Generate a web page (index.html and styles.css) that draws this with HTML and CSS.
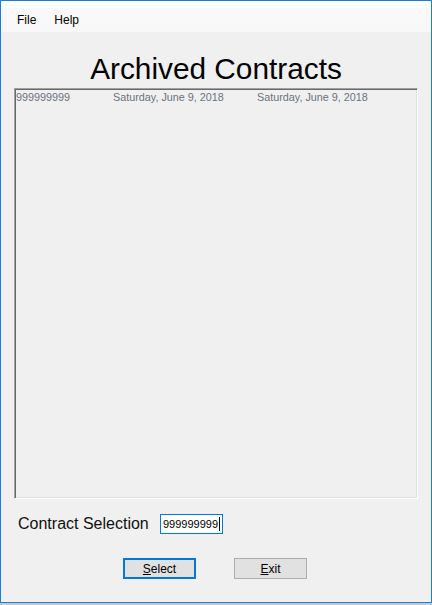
FILE: index.html
```html
<!DOCTYPE html>
<html>
<head>
<meta charset="utf-8">
<link rel="stylesheet" href="styles.css">
</head>
<body>
<div class="window">
  <div class="menubar">
    <span class="menu-item">File</span>
    <span class="menu-item">Help</span>
  </div>
  <div class="content">
    <h1 class="title">Archived Contracts</h1>
    <div class="listbox">
      <div class="row">
        <span class="col">999999999</span>
        <span class="col">Saturday, June 9, 2018</span>
        <span class="col">Saturday, June 9, 2018</span>
      </div>
    </div>
    <div class="selection">
      <span class="label">Contract Selection</span>
      <div class="input">999999999<span class="caret"></span></div>
    </div>
    <div class="buttons">
      <div class="btn btn-default"><u>S</u>elect</div>
      <div class="btn"><u>E</u>xit</div>
    </div>
  </div>
</div>
<div class="taskbar"></div>
</body>
</html>
```
FILE: styles.css
```css
html, body {
  margin: 0;
  padding: 0;
  background: #f0f0f0;
}
body {
  width: 432px;
  height: 605px;
  overflow: hidden;
  font-family: "Liberation Sans", Arial, sans-serif;
}
.window {
  box-sizing: border-box;
  width: 432px;
  height: 603px;
  border: 1px solid #1a7fd6;
  background: #f0f0f0;
  display: flex;
  flex-direction: column;
}
.menubar {
  box-sizing: border-box;
  height: 31px;
  padding-top: 12px;
  padding-left: 16px;
  display: flex;
  align-items: flex-start;
  background: linear-gradient(#ffffff 0, #ffffff 7px, #f9f9f9 7px, #f8f8f8 100%);
}
.menu-item {
  font-size: 12px;
  line-height: 14px;
  color: #000;
  margin-right: 18px;
}
.content {
  display: flex;
  flex-direction: column;
}
.title {
  margin: 22px 0 4px 0;
  font-weight: normal;
  font-size: 29.8px;
  line-height: 30px;
  height: 30px;
  text-align: center;
  color: #000;
}
.listbox {
  box-sizing: border-box;
  margin-left: 13px;
  width: 404px;
  height: 411px;
  border-top: 1px solid #a0a0a0;
  border-left: 1px solid #a0a0a0;
  border-right: 1px solid #ffffff;
  border-bottom: 1px solid #ffffff;
  box-shadow: inset 1px 1px 0 #696969, inset -1px -1px 0 #e3e3e3;
  background: #f0f0f0;
  padding: 2px 0 0 1px;
}
.row {
  display: grid;
  grid-template-columns: 97px 144px auto;
  font-size: 10.8px;
  line-height: 13px;
  color: #6b7180;
}
.selection {
  margin-top: 15px;
  display: flex;
  align-items: center;
  height: 20px;
}
.label {
  margin-left: 17px;
  width: 142px;
  font-size: 16px;
  line-height: 20px;
  color: #111;
}
.input {
  box-sizing: border-box;
  width: 63px;
  height: 20px;
  border: 1px solid #0078d7;
  background: #fff;
  font-size: 11px;
  line-height: 18px;
  padding-left: 2px;
  color: #000;
  display: flex;
  align-items: center;
}
.caret {
  display: inline-block;
  width: 1px;
  height: 14px;
  background: #000;
  margin-left: 1px;
}
.buttons {
  margin-top: 24px;
  margin-left: 122px;
  display: flex;
  gap: 38px;
}
.btn {
  box-sizing: border-box;
  width: 73px;
  height: 21px;
  border: 1px solid #adadad;
  background: #e1e1e1;
  font-size: 12px;
  line-height: 20px;
  text-align: center;
  color: #000;
}
.btn-default {
  border: 2px solid #0078d7;
  line-height: 18px;
}
.taskbar {
  height: 2px;
  background: #c4c8cc;
}
```
